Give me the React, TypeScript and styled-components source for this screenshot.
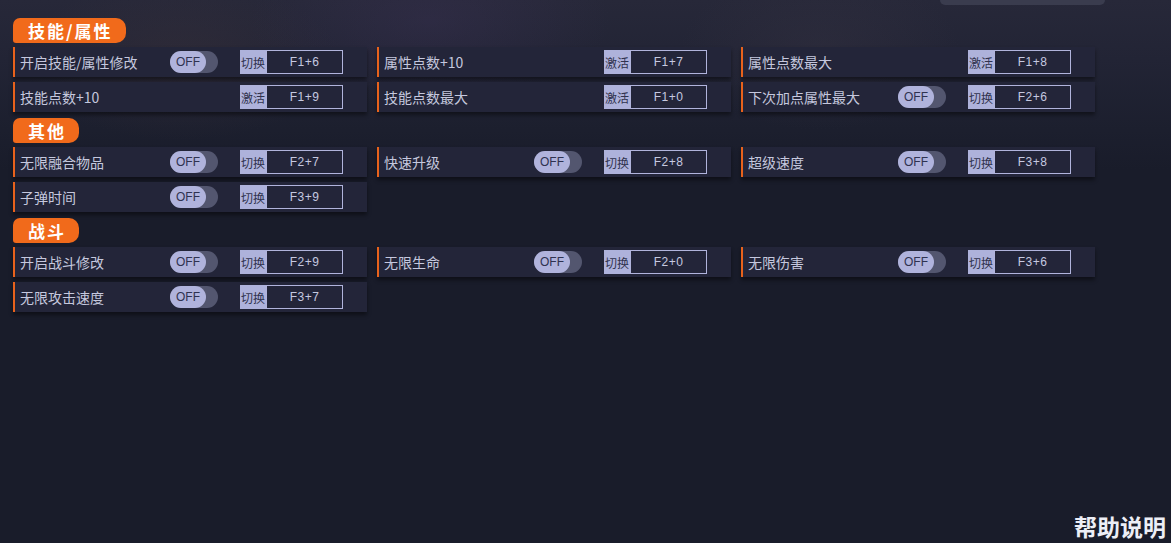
// Vendors
import React from 'react';
import styled, { createGlobalStyle } from 'styled-components';

// Styles
const GlobalStyle = createGlobalStyle`
  html, body {
    margin: 0;
    padding: 0;
    background: #191c2a;
  }
  body {
    font-family: "Noto Sans CJK SC", "Noto Sans", sans-serif;
  }
`;

const Page = styled.div`
  position: relative;
  width: 1171px;
  height: 543px;
  overflow: hidden;
  display: flex;
  flex-direction: column;
  background:
    radial-gradient(ellipse 180px 90px at 430px 20px, rgba(70, 55, 100, 0.25), transparent),
    radial-gradient(ellipse 160px 80px at 180px 60px, rgba(70, 55, 60, 0.3), transparent),
    radial-gradient(ellipse 140px 80px at 820px 50px, rgba(60, 55, 70, 0.3), transparent),
    linear-gradient(180deg, #272839 0px, #222435 60px, #1c1f2e 130px, #191c2a 170px);
`;

const TopBar = styled.div`
  display: flex;
  justify-content: flex-end;
  padding-right: 66px;
  height: 5px;
`;

// partial search box cut by the top edge
const TopPill = styled.div`
  width: 165px;
  height: 5px;
  background: #3a3c4e;
  border-radius: 0 0 10px 10px;
`;

const Content = styled.div`
  display: flex;
  flex-direction: column;
  gap: 6px;
  padding: 13px 0 0 13px;
  flex: 1;
`;

const Section = styled.div`
  display: flex;
  flex-direction: column;
  gap: 4px;
`;

const SectionTitle = styled.div`
  align-self: flex-start;
  height: 25px;
  padding: 0 13px 0 15px;
  display: flex;
  align-items: center;
  justify-content: center;
  background: #f16a1b;
  border-radius: 7px 10px 10px 3px;
  color: #ffffff;
  font-size: 17px;
  font-weight: bold;
  letter-spacing: 2px;
`;

const Grid = styled.div`
  display: grid;
  grid-template-columns: repeat(3, 354px);
  column-gap: 10px;
  row-gap: 5px;
`;

const Row = styled.div`
  height: 30px;
  box-sizing: border-box;
  display: flex;
  align-items: center;
  border-left: 2px solid #e8621c;
  background: #232539;
  box-shadow: 0 3px 4px rgba(0, 0, 0, 0.45);
`;

const Label = styled.span`
  width: 150px;
  padding-left: 5px;
  color: #c5c8de;
  font-size: 14px;
  white-space: nowrap;
`;

const Toggle = styled.div`
  width: 48px;
  height: 22px;
  display: flex;
  background: #53566f;
  border-radius: 11px;
`;

const Knob = styled.div`
  width: 36px;
  height: 22px;
  display: flex;
  align-items: center;
  justify-content: center;
  background: #b0b3dc;
  border-radius: 11px;
  color: #2f3250;
  font-family: "Liberation Sans", "Noto Sans", sans-serif;
  font-size: 12px;
`;

const ToggleSpacer = styled.div`
  width: 48px;
`;

const Hotkey = styled.div`
  display: flex;
  margin-left: 22px;
  height: 24px;
`;

const HotkeyType = styled.span`
  width: 26px;
  display: flex;
  align-items: center;
  justify-content: center;
  background: #aeb2db;
  color: #30334e;
  font-size: 12px;
  white-space: nowrap;
`;

const HotkeyKeys = styled.span`
  width: 77px;
  box-sizing: border-box;
  display: flex;
  align-items: center;
  justify-content: center;
  border: 1px solid #b1b4dc;
  color: #c6c9e0;
  font-family: "Liberation Sans", "Noto Sans", sans-serif;
  font-size: 12px;
  letter-spacing: 0.5px;
`;

const Footer = styled.div`
  display: flex;
  justify-content: flex-end;
  padding: 0 5px 4px 0;
`;

const HelpLink = styled.span`
  color: #eceef6;
  font-size: 23px;
  font-weight: bold;
  line-height: 26px;
`;

type Item = { label: string; toggle: boolean; type: string; keys: string };

const sections: { title: string; items: Item[] }[] = [
  {
    title: '技能/属性',
    items: [
      { label: '开启技能/属性修改', toggle: true, type: '切换', keys: 'F1+6' },
      { label: '属性点数+10', toggle: false, type: '激活', keys: 'F1+7' },
      { label: '属性点数最大', toggle: false, type: '激活', keys: 'F1+8' },
      { label: '技能点数+10', toggle: false, type: '激活', keys: 'F1+9' },
      { label: '技能点数最大', toggle: false, type: '激活', keys: 'F1+0' },
      { label: '下次加点属性最大', toggle: true, type: '切换', keys: 'F2+6' },
    ],
  },
  {
    title: '其他',
    items: [
      { label: '无限融合物品', toggle: true, type: '切换', keys: 'F2+7' },
      { label: '快速升级', toggle: true, type: '切换', keys: 'F2+8' },
      { label: '超级速度', toggle: true, type: '切换', keys: 'F3+8' },
      { label: '子弹时间', toggle: true, type: '切换', keys: 'F3+9' },
    ],
  },
  {
    title: '战斗',
    items: [
      { label: '开启战斗修改', toggle: true, type: '切换', keys: 'F2+9' },
      { label: '无限生命', toggle: true, type: '切换', keys: 'F2+0' },
      { label: '无限伤害', toggle: true, type: '切换', keys: 'F3+6' },
      { label: '无限攻击速度', toggle: true, type: '切换', keys: 'F3+7' },
    ],
  },
];

const App = (): JSX.Element => {
  return (
    <>
      <GlobalStyle />
      <Page>
        <TopBar>
          <TopPill />
        </TopBar>
        <Content>
          {sections.map((section) => (
            <Section key={section.title}>
              <SectionTitle>{section.title}</SectionTitle>
              <Grid>
                {section.items.map((item) => (
                  <Row key={item.label}>
                    <Label>{item.label}</Label>
                    {item.toggle ? (
                      <Toggle>
                        <Knob>OFF</Knob>
                      </Toggle>
                    ) : (
                      <ToggleSpacer />
                    )}
                    <Hotkey>
                      <HotkeyType>{item.type}</HotkeyType>
                      <HotkeyKeys>{item.keys}</HotkeyKeys>
                    </Hotkey>
                  </Row>
                ))}
              </Grid>
            </Section>
          ))}
        </Content>
        <Footer>
          <HelpLink>帮助说明</HelpLink>
        </Footer>
      </Page>
    </>
  );
};

export default App;
